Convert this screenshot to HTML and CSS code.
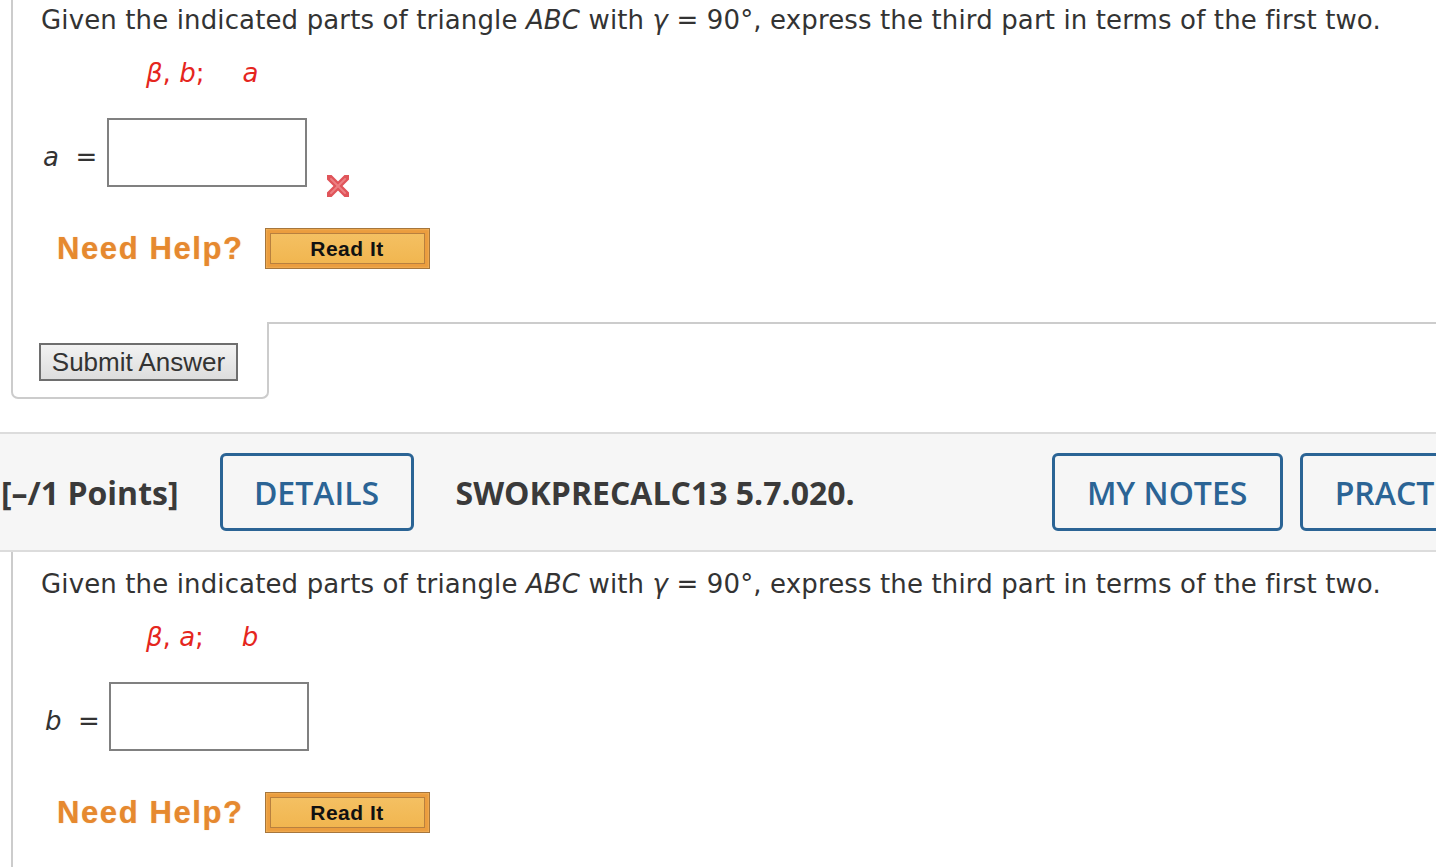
FILE: index.html
```html
<!DOCTYPE html>
<html lang="en">
<head>
<meta charset="utf-8">
<title>Question</title>
<link rel="stylesheet" href="styles.css">
</head>
<body>
<div class="question">
  <div class="qbody">
    <p class="prompt">Given the indicated parts of triangle <i>ABC</i> with <i>γ</i> = 90°, express the third part in terms of the first two.</p>
    <p class="given"><i>β</i>, <i>b</i>;<span class="sp"></span><i>a</i></p>
    <div class="answer-row">
      <span class="label"><i>a</i>&nbsp; =&nbsp;</span>
      <span class="input"></span>
      <svg class="wrong" width="28" height="28" viewBox="0 0 28 28" aria-label="incorrect">
        <defs><filter id="soft"><feGaussianBlur stdDeviation="0.5"/></filter></defs>
        <g filter="url(#soft)" stroke-linecap="round">
          <line x1="5" y1="5" x2="23" y2="23" stroke="#e0545a" stroke-width="6.5"/>
          <line x1="23" y1="5" x2="5" y2="23" stroke="#e0545a" stroke-width="6.5"/>
          <line x1="7" y1="7" x2="21" y2="21" stroke="#ec7f82" stroke-width="2"/>
          <line x1="21" y1="7" x2="7" y2="21" stroke="#ec7f82" stroke-width="2"/>
        </g>
      </svg>
    </div>
    <div class="help-row">
      <span class="need-help">Need Help?</span>
      <span class="read-it"><span class="read-it-inner">Read It</span></span>
    </div>
  </div>
  <div class="submit-tab">
    <button class="submit" type="button">Submit Answer</button>
  </div>
</div>

<div class="qheader">
  <span class="points">[–/1 Points]</span>
  <span class="hbtn details">DETAILS</span>
  <span class="qid">SWOKPRECALC13 5.7.020.</span>
  <span class="hbtn notes">MY NOTES</span>
  <span class="hbtn practice">PRACTICE ANOTHER</span>
</div>

<div class="question second">
  <div class="qbody open">
    <p class="prompt">Given the indicated parts of triangle <i>ABC</i> with <i>γ</i> = 90°, express the third part in terms of the first two.</p>
    <p class="given"><i>β</i>, <i>a</i>;<span class="sp"></span><i>b</i></p>
    <div class="answer-row">
      <span class="label b"><i>b</i>&nbsp; =&nbsp;</span>
      <span class="input"></span>
    </div>
    <div class="help-row">
      <span class="need-help">Need Help?</span>
      <span class="read-it"><span class="read-it-inner">Read It</span></span>
    </div>
  </div>
</div>
</body>
</html>
```
FILE: styles.css
```css
html, body {
  margin: 0;
  padding: 0;
  background: #ffffff;
  overflow: hidden;
  width: 1436px;
  height: 867px;
}

.question {
  margin-left: 11px;
}

.qbody {
  border-left: 2px solid #cccccc;
  border-bottom: 2px solid #cccccc;
  padding: 5px 0 53px 28px;
  font-family: "DejaVu Sans", Verdana, sans-serif;
  font-size: 26px;
  color: #333333;
}

.qbody.open {
  border-bottom: none;
  padding-top: 17px;
  padding-bottom: 60px;
}

.prompt {
  margin: 0;
  line-height: 30px;
  white-space: nowrap;
  letter-spacing: 0.13px;
}

.given {
  margin: 23px 0 0 0;
  padding-left: 105px;
  line-height: 30px;
  color: #e5261e;
}

.given .sp {
  display: inline-block;
  width: 38px;
}

.answer-row {
  display: flex;
  align-items: flex-start;
  margin-top: 30px;
}

.label {
  margin-top: 24px;
  line-height: 30px;
  padding-left: 2px;
  width: 64px;
  white-space: nowrap;
}

.label.b {
  padding-left: 4px;
}

.input {
  display: block;
  width: 196px;
  height: 65px;
  border: 2px solid #808080;
  background: #ffffff;
}

.wrong {
  display: block;
  margin-top: 54px;
  margin-bottom: -40px;
  margin-left: 17px;
}

.help-row {
  display: flex;
  align-items: center;
  margin-top: 41px;
}

.need-help {
  font-family: "Liberation Sans", Arial, sans-serif;
  font-weight: bold;
  font-size: 31px;
  letter-spacing: 1.6px;
  color: #e6892f;
  margin-left: 16px;
  text-shadow: 0 0 1px rgba(230, 137, 47, 0.6);
}

.read-it {
  display: block;
  margin-left: 21px;
  width: 155px;
  height: 31px;
  padding: 4px;
  border: 1px solid #a6763c;
  background: #eb9d3e;
  box-shadow: inset 0 0 2px rgba(255, 220, 150, 0.8);
}

.read-it-inner {
  display: flex;
  align-items: center;
  justify-content: center;
  height: 29px;
  border: 1px solid #b8803f;
  background: linear-gradient(#f4c062, #f1b650);
  font-family: "Liberation Sans", Arial, sans-serif;
  font-weight: bold;
  font-size: 21px;
  letter-spacing: 0.5px;
  color: #111111;
}

.submit-tab {
  margin-top: -2px;
  padding: 21px 0 16px 26px;
  box-sizing: border-box;
  width: 258px;
  border: 2px solid #cccccc;
  border-top: none;
  border-radius: 0 0 7px 7px;
  background: #ffffff;
  position: relative;
}

.submit {
  display: block;
  width: 199px;
  height: 38px;
  margin: 0;
  padding: 0;
  border: 2px solid #6e6e6e;
  border-radius: 0;
  background: linear-gradient(#f2f2f2, #dddddd);
  font-family: "Liberation Sans", Arial, sans-serif;
  font-size: 26px;
  color: #333333;
  line-height: 32px;
}

.qheader {
  display: flex;
  align-items: center;
  margin-top: 33px;
  height: 116px;
  background: #f6f6f6;
  border-top: 2px solid #dcdcdc;
  border-bottom: 2px solid #dcdcdc;
  font-family: "Open Sans", sans-serif;
  white-space: nowrap;
}

.points {
  flex-shrink: 0;
  font-weight: 700;
  font-size: 32px;
  color: #3a3a3a;
  padding-left: 1px;
}

.qid {
  flex-shrink: 0;
  font-weight: 700;
  font-size: 32px;
  color: #3a3a3a;
  margin-left: 42px;
}

.hbtn {
  flex-shrink: 0;
  display: flex;
  align-items: center;
  justify-content: center;
  box-sizing: border-box;
  height: 78px;
  border: 3px solid #2b6495;
  border-radius: 6px;
  font-weight: 600;
  font-size: 32px;
  color: #2b6495;
  padding: 0 32px;
}

.details {
  margin-left: 41px;
  width: 194px;
}

.notes {
  margin-left: 197px;
  width: 231px;
}

.practice {
  margin-left: 17px;
}
```
